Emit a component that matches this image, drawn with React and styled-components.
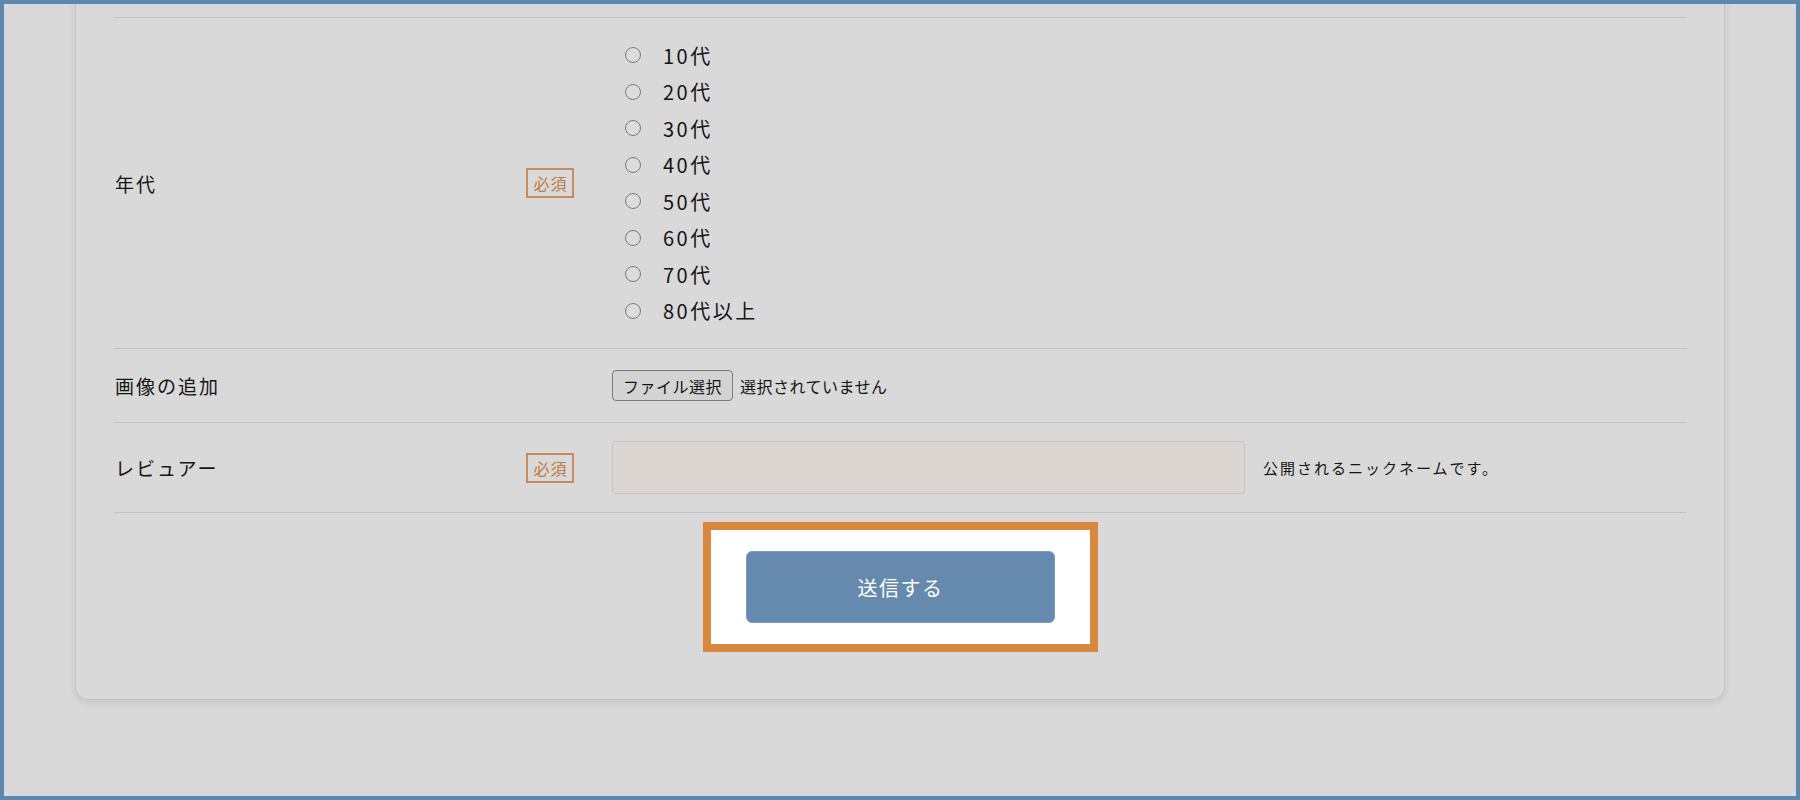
import React from "react"
import styled, { createGlobalStyle } from "styled-components"

const GlobalStyle = createGlobalStyle`
  html, body {
    margin: 0;
    padding: 0;
    background: #d9d9d9;
  }
  body {
    font-family: "Noto Sans CJK JP", "Noto Sans", sans-serif;
    color: #151515;
  }
  * {
    box-sizing: border-box;
  }
`

const Frame = styled.div`
  height: 100vh;
  border: 4px solid #5e87ad;
  background: #d9d9d9;
  overflow: hidden;
  display: flex;
  flex-direction: column;
  justify-content: flex-end;
  padding: 0 72px 97px;
`

const Card = styled.form`
  flex-shrink: 0;
  background: #d9d9d9;
  border-radius: 12px;
  box-shadow: 0 0 0 1px rgba(0, 0, 0, 0.05), 0 3px 10px rgba(0, 0, 0, 0.1);
  padding: 40px 37px 47px 38px;
`

const Row = styled.div`
  display: grid;
  grid-template-columns: 460px 1fr;
  column-gap: 38px;
  align-items: center;
  padding: ${(p) => p.$pad}px 0;
  border-bottom: 1px solid #c3c3c3;
  ${(p) => p.$first && `border-top: 1px solid #c3c3c3;`}
`

const Head = styled.div`
  display: flex;
  align-items: center;
  justify-content: space-between;
`

const Label = styled.span`
  font-size: 19px;
  letter-spacing: 2px;
  padding-left: 1px;
`

const Required = styled.span`
  width: 48px;
  height: 30px;
  display: flex;
  align-items: center;
  justify-content: center;
  border: 2px solid #c98b5c;
  color: #c07c48;
  font-size: 16px;
  letter-spacing: 1px;
  padding-left: 1px;
`

const RadioList = styled.div`
  display: flex;
  flex-direction: column;
`

const RadioItem = styled.label`
  display: flex;
  align-items: center;
  height: 36.5px;
  padding-left: 13px;
  gap: 22px;
  font-size: 20px;
  letter-spacing: 2.5px;
`

const Circle = styled.span`
  width: 16px;
  height: 16px;
  border-radius: 50%;
  border: 1.5px solid #7a7a7a;
  background: #dcdcdc;
  flex-shrink: 0;
`

const FileField = styled.div`
  display: flex;
  align-items: center;
  gap: 7px;
  font-size: 16px;
  letter-spacing: 0.5px;
`

const FileButton = styled.button`
  width: 121px;
  height: 31px;
  border: 1px solid #7c7c7c;
  border-radius: 4px;
  background: #d3d3d3;
  font-family: inherit;
  font-size: 16px;
  letter-spacing: 0.5px;
  color: #151515;
  padding: 0;
`

const InputLine = styled.div`
  display: flex;
  align-items: center;
  gap: 18px;
`

const TextInput = styled.input`
  width: 633px;
  height: 53px;
  border: 1px solid #c7c4c1;
  border-radius: 3px;
  background: #dbd6d2;
  font-family: inherit;
  font-size: 18px;
  padding: 0 12px;
`

const Hint = styled.span`
  font-size: 15px;
  letter-spacing: 2px;
`

const SubmitArea = styled.div`
  display: flex;
  justify-content: center;
  padding-top: 9px;
`

const Highlight = styled.div`
  background: #ffffff;
  border: 8px solid #d8873f;
  padding: 21px 35px;
`

const SubmitButton = styled.button`
  display: block;
  width: 309px;
  height: 72px;
  border: 1px solid #7c9ac0;
  border-radius: 6px;
  background: #6689ae;
  color: #ffffff;
  font-family: inherit;
  font-size: 20px;
  letter-spacing: 1.5px;
`

const ages = ["10代", "20代", "30代", "40代", "50代", "60代", "70代", "80代以上"]

export default function App() {
  return (
    <>
      <GlobalStyle />
      <Frame>
        <Card onSubmit={(e) => e.preventDefault()}>
          <Row $first $pad={19}>
            <Head>
              <Label>年代</Label>
              <Required>必須</Required>
            </Head>
            <RadioList>
              {ages.map((age) => (
                <RadioItem key={age}>
                  <Circle />
                  {age}
                </RadioItem>
              ))}
            </RadioList>
          </Row>
          <Row $pad={21}>
            <Head>
              <Label>画像の追加</Label>
            </Head>
            <FileField>
              <FileButton type="button">ファイル選択</FileButton>
              <span>選択されていません</span>
            </FileField>
          </Row>
          <Row $pad={18}>
            <Head>
              <Label>レビュアー</Label>
              <Required>必須</Required>
            </Head>
            <InputLine>
              <TextInput type="text" />
              <Hint>公開されるニックネームです。</Hint>
            </InputLine>
          </Row>
          <SubmitArea>
            <Highlight>
              <SubmitButton type="submit">送信する</SubmitButton>
            </Highlight>
          </SubmitArea>
        </Card>
      </Frame>
    </>
  )
}
